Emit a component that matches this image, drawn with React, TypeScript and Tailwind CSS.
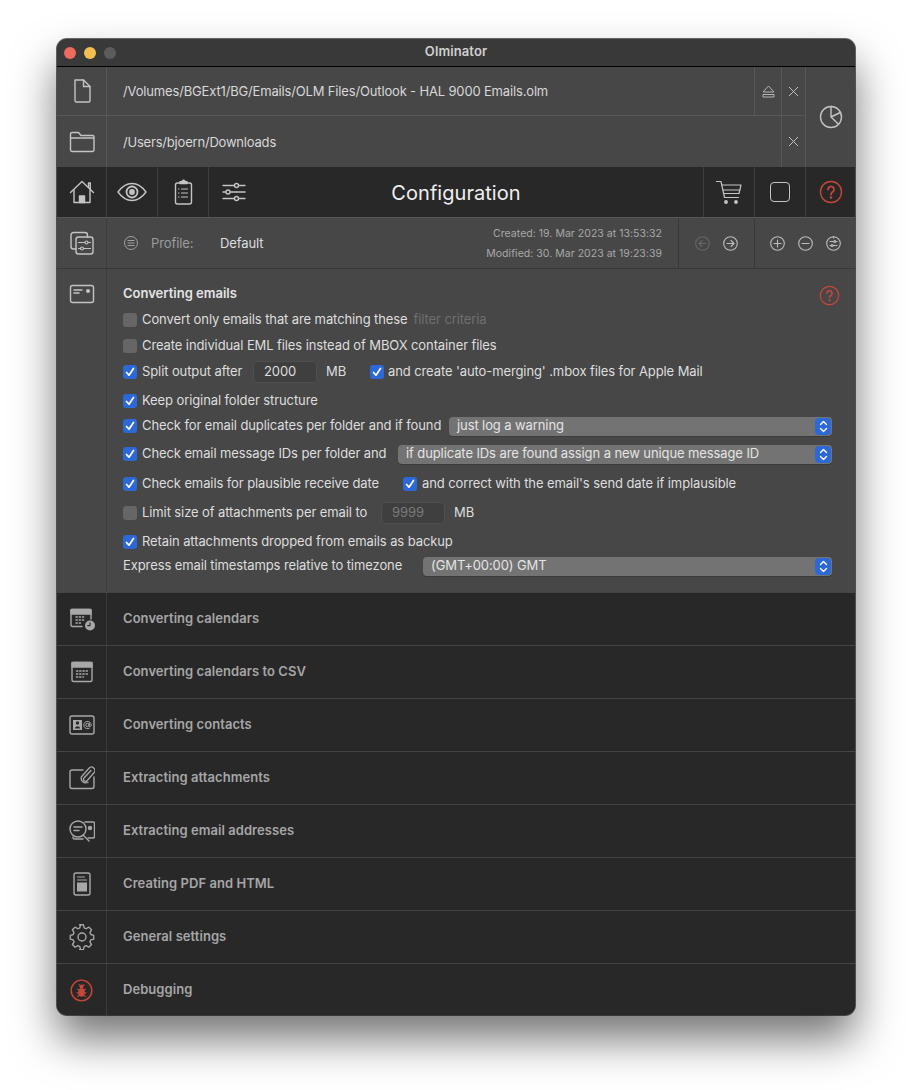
import React from "react";

const stroke = {
  fill: "none",
  stroke: "currentColor",
  strokeWidth: 1.4,
  strokeLinecap: "round" as const,
  strokeLinejoin: "round" as const,
};

function Icon({ size = 26, children, className = "" }: { size?: number; children: React.ReactNode; className?: string }) {
  return (
    <svg width={size} height={size} viewBox="0 0 26 26" className={className} {...stroke}>
      {children}
    </svg>
  );
}

const FileIcon = () => (
  <Icon>
    <path d="M6 2h8.500L21 8.500v14a1.500 1.500 0 0 1-1.500 1.500h-12A1.500 1.500 0 0 1 6 22.500z" />
    <path d="M14.500 2v6.500H21" />
  </Icon>
);
const FolderIcon = () => (
  <Icon>
    <path d="M1.500 21V5a1.500 1.500 0 0 1 1.500-1.500h6.500l2.500 3h12a1.500 1.500 0 0 1 1 1.500V21a1.500 1.500 0 0 1-1.500 1.500H3A1.500 1.500 0 0 1 1.500 21z" />
    <path d="M1.500 9h23" />
  </Icon>
);
const PieIcon = () => (
  <Icon>
    <circle cx="13" cy="13" r="10.500" />
    <path d="M13 2.500V13l7.500 7.300M13 13l9.300-4.500" />
  </Icon>
);
const HomeIcon = () => (
  <Icon>
    <path d="M1.500 13.500 13 2.500l11.500 11" />
    <path d="M19.500 8.500V4h1.800v6.500" />
    <path d="M5 11v12.500h16V11" />
    <path d="M10.500 23.500V17h5v6.500z" fill="currentColor" />
  </Icon>
);
const EyeIcon = () => (
  <svg width="30" height="20" viewBox="0 0 30 20" {...stroke}>
    <path d="M1 10c4-5.500 8.500-8.500 14-8.500S25 4.500 29 10c-4 5.500-8.500 8.500-14 8.500S5 15.500 1 10z" />
    <circle cx="15" cy="10" r="5.500" strokeWidth="1.800" />
    <circle cx="15" cy="10" r="2.200" fill="currentColor" />
  </svg>
);
const ClipboardIcon = () => (
  <Icon>
    <rect x="5.500" y="4" width="16" height="21" rx="2" />
    <path d="M10 4.500V2.800h2a1.500 1.500 0 0 1 3 0h2v1.700z" fill="currentColor" />
    <path d="M11.500 10h6M11.500 14h6M11.500 18h6M8.500 10h.5M8.500 14h.5M8.500 18h.5" strokeWidth="1.200" />
  </Icon>
);
const SlidersIcon = () => (
  <Icon>
    <path d="M2 6.500h11M18 6.500h6M2 13h2.500M9.500 13h14.500M2 19.500h11M18 19.500h6" />
    <circle cx="15.500" cy="6.500" r="2" />
    <circle cx="7" cy="13" r="2" />
    <circle cx="15.500" cy="19.500" r="2" />
  </Icon>
);
const CartIcon = () => (
  <Icon>
    <path d="M0.500 2.500H5l3.500 16h14" strokeWidth="1.200" />
    <path d="M6 6h19l-2 8.500H8M7.500 11h16.500" strokeWidth="1.200" />
    <circle cx="10" cy="23" r="1.200" fill="currentColor" />
    <circle cx="20" cy="23" r="1.200" fill="currentColor" />
  </Icon>
);
const HelpIcon = ({ size = 24 }: { size?: number }) => (
  <svg width={size} height={size} viewBox="0 0 24 24" className="text-[#c6463a]" {...stroke}>
    <circle cx="12" cy="12" r="10.500" />
    <path d="M9 9.500a3 3 0 1 1 4.600 2.500c-1 .7-1.600 1.200-1.600 2.500" strokeWidth="1.800" />
    <circle cx="12" cy="17.500" r=".6" fill="currentColor" />
  </svg>
);
const ProfilesIcon = () => (
  <Icon>
    <path d="M7 19H4.500A2.500 2.500 0 0 1 2 16.500V5a2.500 2.500 0 0 1 2.500-2.500H16A2.500 2.500 0 0 1 18.500 5v2" />
    <rect x="7" y="7" width="17" height="17" rx="2.500" />
    <path d="M9.500 12.500h6M19.500 12.500h2M9.500 18.500h1.500M15 18.500h6.500" strokeWidth="1.200" />
    <circle cx="17.500" cy="12.500" r="1.500" strokeWidth="1.200" />
    <circle cx="13" cy="18.500" r="1.500" strokeWidth="1.200" />
  </Icon>
);
const ListCircle = () => (
  <svg width="14" height="14" viewBox="0 0 14 14" fill="none" stroke="currentColor" strokeWidth="1">
    <circle cx="7" cy="7" r="6.500" />
    <path d="M3.500 4.500h7M3.500 7h7M3.500 9.500h7" />
  </svg>
);
const RoundIcon = ({ children, dim }: { children: React.ReactNode; dim?: boolean }) => (
  <svg width="15" height="15" viewBox="0 0 15 15" className={dim ? "text-[#666666]" : "text-[#bdbdbd]"} fill="none" stroke="currentColor" strokeWidth="1.100" strokeLinecap="round" strokeLinejoin="round">
    <circle cx="7.500" cy="7.500" r="6.800" />
    {children}
  </svg>
);
const CardIcon = () => (
  <Icon>
    <rect x="1.500" y="4.500" width="23" height="17" rx="2" />
    <path d="M5 9h8M5 12h5" strokeWidth="1.500" />
    <circle cx="19" cy="10" r="2" fill="currentColor" stroke="none" />
  </Icon>
);
const CalClockIcon = () => (
  <Icon>
    <path d="M13 20.500H3.500A1.500 1.500 0 0 1 2 19V5a1.500 1.500 0 0 1 1.500-1.500h17A1.500 1.500 0 0 1 22 5v8" />
    <path d="M2 3.500h20V8H2z" fill="currentColor" />
    <path d="M7 11h9M7 14h9M7 17h6" strokeDasharray="1.300 1.900" />
    <circle cx="21" cy="19.500" r="5" fill="currentColor" stroke="none" />
    <path d="M21 16.800v2.800h-2.300" stroke="#282828" strokeWidth="1.100" />
  </Icon>
);
const CalIcon = () => (
  <Icon>
    <rect x="3" y="3.500" width="20" height="19" rx="1.500" />
    <path d="M3 3.500h20V8H3z" fill="currentColor" />
    <path d="M7.500 12h11M7.500 15h11M7.500 18h7" strokeDasharray="1.300 1.900" />
  </Icon>
);
const ContactIcon = () => (
  <Icon>
    <rect x="1" y="4" width="24" height="18" rx="2" />
    <rect x="4" y="8" width="9" height="10" fill="currentColor" stroke="none" />
    <circle cx="8.500" cy="11" r="1.700" fill="#282828" stroke="none" />
    <path d="M6 16.500c0-3 5-3 5 0z" fill="#282828" stroke="none" />
    <circle cx="18.500" cy="13" r="1.700" strokeWidth="1" />
    <path d="M20.200 11.300v2.500c0 1.300 2 1 2-.8a3.700 3.700 0 1 0-1.700 3.200" strokeWidth="1" />
  </Icon>
);
const AttachIcon = () => (
  <Icon>
    <path d="M14 5H3a2 2 0 0 0-2 2v14.500a2 2 0 0 0 2 2h20a2 2 0 0 0 2-2V12" />
    <path d="M22 5.500l-7 7.500a2 2 0 0 0 3 2.700l7-8a3.300 3.300 0 0 0-5-4.500l-7.500 8.500a4.500 4.500 0 0 0 6.500 5.500" strokeWidth="1.300" />
  </Icon>
);
const AddressIcon = () => (
  <Icon>
    <path d="M16 4h8a1.500 1.500 0 0 1 1.500 1.500v13a1.500 1.500 0 0 1-1.500 1.500h-5M4 19v.5A1.500 1.500 0 0 0 5.500 21H14" />
    <circle cx="9" cy="11" r="8" />
    <path d="M5 9h8M5 12.500h5M14 17l6 6" />
    <circle cx="21" cy="10" r="2.200" fill="currentColor" stroke="none" />
  </Icon>
);
const PdfIcon = () => (
  <Icon>
    <rect x="5" y="2" width="16" height="22" rx="2" />
    <path d="M8.500 6h7M8.500 9h9" strokeWidth="1.200" />
    <rect x="8" y="11.500" width="10" height="9" fill="currentColor" stroke="none" />
  </Icon>
);
const GearIcon = () => (
  <Icon>
    <path d="M11 1.800h4l.8 3.300 2 .9 2.900-1.700 2.800 2.800-1.700 2.900.9 2 3 .8v4l-3 .8-.9 2 1.700 2.900-2.800 2.800-2.900-1.700-2 .9-.8 3.300h-4" transform="translate(0 -1) scale(.96)" />
    <path d="M11 1.800l-.8 3.300-2 .9-2.900-1.700-2.800 2.800 1.700 2.900-.9 2-3 .8v4l3 .8.900 2-1.700 2.900 2.800 2.800 2.900-1.700 2 .9.800 3.300" transform="translate(1 -1) scale(.96)" />
    <circle cx="13" cy="13" r="4" />
  </Icon>
);
const BugIcon = () => (
  <svg width="23" height="23" viewBox="0 0 24 24" className="text-[#c6463a]" fill="none" stroke="currentColor" strokeWidth="1.500">
    <circle cx="12" cy="12" r="10.800" />
    <ellipse cx="12" cy="14" rx="3.400" ry="4.400" fill="currentColor" stroke="none" />
    <circle cx="12" cy="8" r="2.200" fill="currentColor" stroke="none" />
    <path d="M9 5.500l1.500 1.500M15 5.500l-1.500 1.500M7.500 10.500l2.500 1.500M16.500 10.500l-2.500 1.500M7 14.500h3M17 14.500h-3M7.500 18.500l2.500-2M16.500 18.500l-2.500-2" strokeWidth="1.100" />
  </svg>
);

function Check({ on = true }: { on?: boolean }) {
  return on ? (
    <span className="flex h-[14px] w-[14px] shrink-0 items-center justify-center rounded-[3px] bg-[#2d69d6]">
      <svg width="10" height="10" viewBox="0 0 10 10" fill="none" stroke="white" strokeWidth="1.700" strokeLinecap="round" strokeLinejoin="round">
        <path d="M1.500 5.500 4 8.200 8.500 1.500" />
      </svg>
    </span>
  ) : (
    <span className="h-[14px] w-[14px] shrink-0 rounded-[3px] bg-[#666666]" />
  );
}

function Select({ value, width }: { value: string; width: string }) {
  return (
    <div className={`flex h-[19px] items-center justify-between rounded-[4px] bg-[#737373] pl-[8px] pr-[1px] text-[#e4e4e4] shadow-[0_1px_0_#3a3a3a] ${width}`}>
      <span>{value}</span>
      <span className="flex h-[17px] w-[16px] items-center justify-center rounded-[4px] bg-[#2d69d6]">
        <svg width="9" height="13" viewBox="0 0 9 13" fill="none" stroke="white" strokeWidth="1.400" strokeLinecap="round" strokeLinejoin="round">
          <path d="M1.500 4.500 4.500 1.500l3 3M1.500 8.500l3 3 3-3" />
        </svg>
      </span>
    </div>
  );
}

function Row({ height, children }: { height: string; children: React.ReactNode }) {
  return <div className={`flex items-center ${height}`}>{children}</div>;
}

const sections = [
  { label: "Converting calendars", icon: <CalClockIcon /> },
  { label: "Converting calendars to CSV", icon: <CalIcon /> },
  { label: "Converting contacts", icon: <ContactIcon /> },
  { label: "Extracting attachments", icon: <AttachIcon /> },
  { label: "Extracting email addresses", icon: <AddressIcon /> },
  { label: "Creating PDF and HTML", icon: <PdfIcon /> },
  { label: "General settings", icon: <GearIcon /> },
  { label: "Debugging", icon: <BugIcon /> },
];

export default function App() {
  return (
    <div className="h-[1090px] w-[912px] overflow-hidden bg-white pl-[57px] pt-[39px] font-['Inter',sans-serif] text-[13px] tracking-[-0.1px] text-[#dedede]">
      <div className="flex h-[976px] w-[798px] flex-col overflow-hidden rounded-[10px] bg-[#282828] shadow-[0_24px_44px_rgba(0,0,0,0.55),0_0_0_1px_#6a6a6a]">
        {/* title bar */}
        <div className="flex h-[28px] shrink-0 items-center border-b border-black bg-[#393939] pl-[7px]">
          <div className="flex w-[60px] gap-[8px]">
            <span className="h-[12px] w-[12px] rounded-full bg-[#ed6a5e]" />
            <span className="h-[12px] w-[12px] rounded-full bg-[#f5bf4f]" />
            <span className="h-[12px] w-[12px] rounded-full bg-[#5c5c5c]" />
          </div>
          <div className="mb-[2px] flex-1 pr-[67px] text-center font-semibold tracking-[0.1px] text-[#d0d0d0]">Olminator</div>
        </div>

        {/* source and target */}
        <div className="flex h-[100px] shrink-0 bg-[#474747]">
          <div className="flex-1">
            <div className="flex h-[49px] items-center border-b border-[#575757]">
              <div className="flex h-full w-[50px] items-center justify-center border-r border-[#575757] text-[#c4c4c4]">
                <FileIcon />
              </div>
              <div className="flex-1 pl-[16px] pt-[2px] tracking-[-0.16px] text-[#d8d8d8]">/Volumes/BGExt1/BG/Emails/OLM Files/Outlook - HAL 9000 Emails.olm</div>
              <div className="flex h-full w-[27px] items-center justify-center border-l border-[#575757] text-[#b5b5b5]">
                <svg width="13" height="13" viewBox="0 0 13 13" fill="none" stroke="currentColor" strokeWidth="1">
                  <path d="M6.500 1 12 7H1zM1 9.500h11V12H1z" />
                </svg>
              </div>
              <div className="flex h-full w-[24px] items-center justify-center border-l border-[#575757] text-[#c0c0c0]">
                <svg width="11" height="11" viewBox="0 0 11 11" stroke="currentColor" strokeWidth="1">
                  <path d="M1 1l9 9M10 1l-9 9" />
                </svg>
              </div>
            </div>
            <div className="flex h-[51px] items-center">
              <div className="flex h-full w-[50px] items-center justify-center border-r border-[#575757] text-[#c4c4c4]">
                <FolderIcon />
              </div>
              <div className="flex-1 pl-[16px] pt-[2px] tracking-[-0.2px] text-[#d8d8d8]">/Users/bjoern/Downloads</div>
              <div className="flex h-full w-[24px] items-center justify-center border-l border-[#575757] text-[#c0c0c0]">
                <svg width="11" height="11" viewBox="0 0 11 11" stroke="currentColor" strokeWidth="1">
                  <path d="M1 1l9 9M10 1l-9 9" />
                </svg>
              </div>
            </div>
          </div>
          <div className="flex w-[50px] items-center justify-center border-l border-[#575757] text-[#c4c4c4]">
            <PieIcon />
          </div>
        </div>

        {/* toolbar */}
        <div className="flex h-[51px] shrink-0 items-center border-b border-[#575757] bg-[#282828] text-[#c4c4c4]">
          <div className="flex h-full w-[50px] items-center justify-center border-r border-[#3d3d3d]"><HomeIcon /></div>
          <div className="flex h-full w-[51px] items-center justify-center border-r border-[#3d3d3d]"><EyeIcon /></div>
          <div className="flex h-full w-[51px] items-center justify-center border-r border-[#3d3d3d]"><ClipboardIcon /></div>
          <div className="flex h-full flex-1 items-center pl-[12px]">
            <SlidersIcon />
            <div className="flex-1 pr-[38px] pt-[2px] text-center text-[20px] tracking-[0.05px] text-[#f0f0f0]">Configuration</div>
          </div>
          <div className="flex h-full w-[51px] items-center justify-center border-l border-[#3d3d3d]"><CartIcon /></div>
          <div className="flex h-full w-[51px] items-center justify-center border-l border-[#3d3d3d]">
            <span className="h-[20px] w-[20px] rounded-[4px] border-[1.500px] border-[#c4c4c4]" />
          </div>
          <div className="flex h-full w-[50px] items-center justify-center border-l border-[#3d3d3d]"><HelpIcon /></div>
        </div>

        {/* profile */}
        <div className="flex h-[51px] shrink-0 items-center border-b border-[#383838] bg-[#474747]">
          <div className="flex h-full w-[50px] items-center justify-center border-r border-[#3d3d3d] text-[#c4c4c4]">
            <ProfilesIcon />
          </div>
          <div className="ml-[17px] text-[#a0a0a0]"><ListCircle /></div>
          <div className="ml-[13px] w-[69px] pt-[2px] text-[#9c9c9c]">Profile:</div>
          <div className="flex-1 pt-[2px] text-[#dedede]">Default</div>
          <div className="flex h-full flex-col items-end justify-center gap-[5px] pr-[16px] text-[10.500px] leading-[15px] tracking-[0.03px] text-[#a8a8a8]">
            <span>Created: 19. Mar 2023 at 13:53:32</span>
            <span>Modified: 30. Mar 2023 at 19:23:39</span>
          </div>
          <div className="flex h-full w-[76px] items-center justify-center gap-[13px] border-l border-[#383838]">
            <RoundIcon dim><path d="M11 7.500H4M7 4.500l-3 3 3 3" /></RoundIcon>
            <RoundIcon><path d="M4 7.500h7M8 4.500l3 3-3 3" /></RoundIcon>
          </div>
          <div className="flex h-full w-[101px] items-center justify-center gap-[13px] border-l border-[#383838]">
            <RoundIcon><path d="M7.500 4v7M4 7.500h7" /></RoundIcon>
            <RoundIcon><path d="M4 7.500h7" /></RoundIcon>
            <RoundIcon><path d="M7.500 0v2M4 5.500h3.500M10 5.500h1M4 9.500h1M7.500 9.500h3.500" /><circle cx="8.800" cy="5.500" r="1" /><circle cx="6.200" cy="9.500" r="1" /></RoundIcon>
          </div>
        </div>

        {/* converting emails */}
        <div className="flex h-[323px] shrink-0 bg-[#474747]">
          <div className="flex w-[50px] justify-center border-r border-[#3d3d3d] pt-[12px] text-[#c4c4c4]">
            <CardIcon />
          </div>
          <div className="flex-1 pl-[16px] pr-[15px] pt-[13px]">
            <div className="flex h-[24px] items-center justify-between">
              <span className="font-semibold tracking-[0px] text-[#e4e4e4]">Converting emails</span>
              <span className="mt-[2px] flex"><HelpIcon size={21} /></span>
            </div>
            <Row height="h-[28px]">
              <Check on={false} />
              <span className="ml-[5px]">Convert only emails that are matching these</span>
              <span className="ml-[6px] text-[#6f6f6f]">filter criteria</span>
            </Row>
            <Row height="h-[24px]">
              <Check on={false} />
              <span className="ml-[5px]">Create individual EML files instead of MBOX container files</span>
            </Row>
            <Row height="h-[28px]">
              <Check />
              <span className="ml-[5px] w-[112px]">Split output after</span>
              <span className="flex h-[20px] w-[62px] items-center rounded-[4px] bg-[#3f3f3f] pl-[10px] shadow-[0_0_0_1px_#4f4f4f]">2000</span>
              <span className="ml-[10px] w-[44px]">MB</span>
              <Check />
              <span className="ml-[4px]">and create 'auto-merging' .mbox files for Apple Mail</span>
            </Row>
            <Row height="h-[30px]">
              <Check />
              <span className="ml-[5px]">Keep original folder structure</span>
            </Row>
            <Row height="h-[20px]">
              <Check />
              <span className="ml-[5px] w-[307px]">Check for email duplicates per folder and if found</span>
              <Select value="just log a warning" width="w-[383px]" />
            </Row>
            <Row height="h-[36px]">
              <Check />
              <span className="ml-[5px] w-[256px]">Check email message IDs per folder and</span>
              <Select value="if duplicate IDs are found assign a new unique message ID" width="w-[434px]" />
            </Row>
            <Row height="h-[24px]">
              <Check />
              <span className="ml-[5px] w-[261px]">Check emails for plausible receive date</span>
              <Check />
              <span className="ml-[5px]">and correct with the email's send date if implausible</span>
            </Row>
            <Row height="h-[34px]">
              <Check on={false} />
              <span className="ml-[5px] w-[240px]">Limit size of attachments per email to</span>
              <span className="flex h-[20px] w-[62px] items-center rounded-[4px] bg-[#3f3f3f] pl-[10px] text-[#7a7a7a] shadow-[0_0_0_1px_#4f4f4f]">9999</span>
              <span className="ml-[10px]">MB</span>
            </Row>
            <Row height="h-[24px]">
              <Check />
              <span className="ml-[5px]">Retain attachments dropped from emails as backup</span>
            </Row>
            <Row height="h-[24px]">
              <span className="w-[300px]">Express email timestamps relative to timezone</span>
              <Select value="(GMT+00:00) GMT" width="w-[409px]" />
            </Row>
          </div>
        </div>

        {/* collapsed sections */}
        <div className="flex-1">
          {sections.map((s) => (
            <div key={s.label} className="flex h-[53px] items-center border-t border-[#444444] bg-[#282828]">
              <div className="flex h-full w-[50px] items-center justify-center border-r border-[#3a3a3a] text-[#a8a8a8]">
                {s.icon}
              </div>
              <span className="pl-[16px] font-semibold tracking-[0.05px] text-[#a6a6a6]">{s.label}</span>
            </div>
          ))}
        </div>
      </div>
    </div>
  );
}
